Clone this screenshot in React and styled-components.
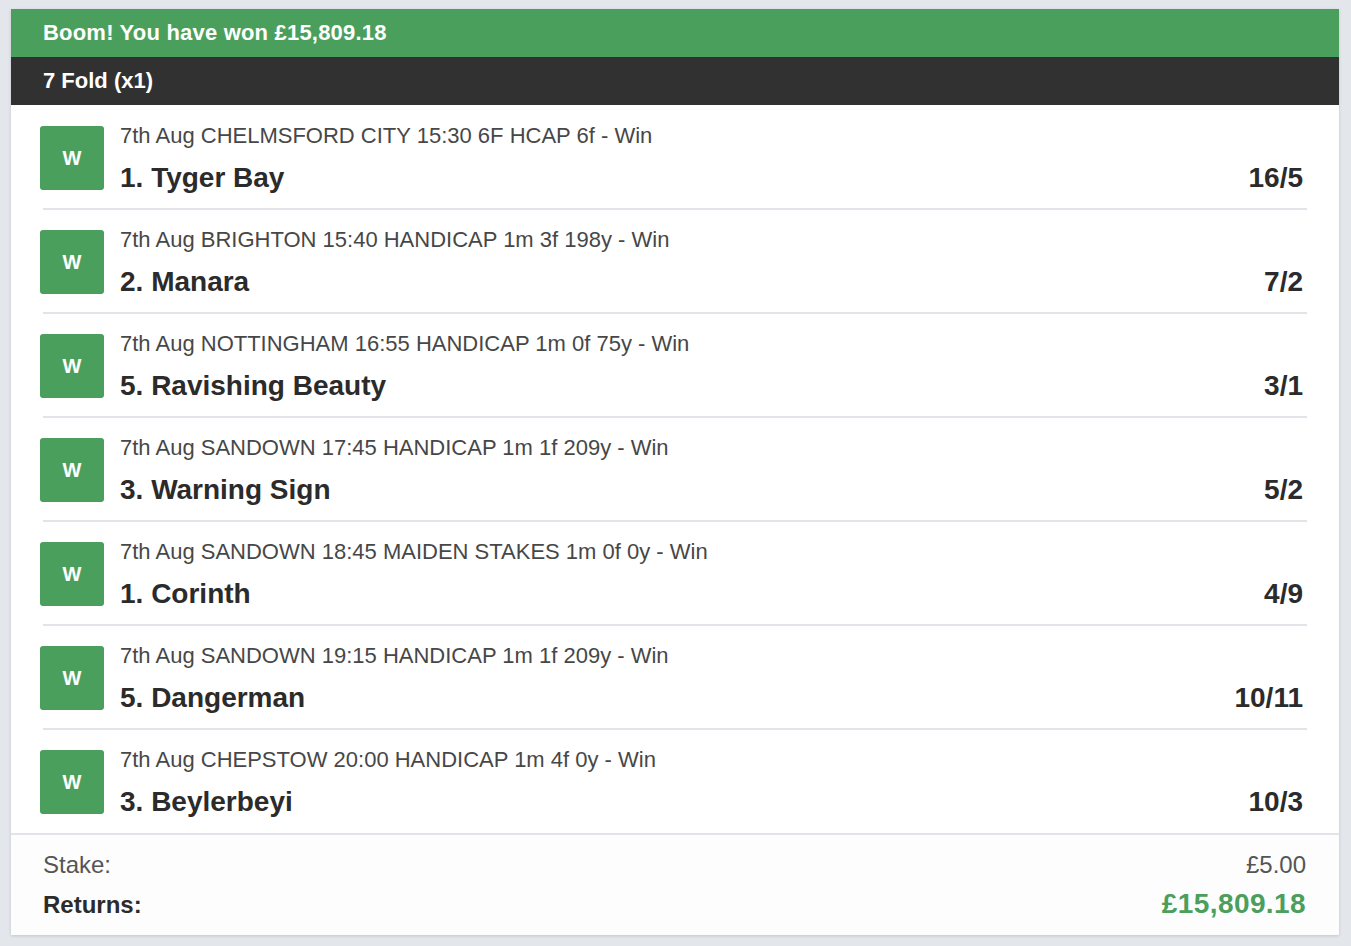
import { createGlobalStyle, styled } from 'styled-components';

const GlobalStyle = createGlobalStyle`
  body {
    margin: 0;
    background: #e3e7ec;
    font-family: 'Liberation Sans', Arial, sans-serif;
  }
`;

const Page = styled.div`
  padding: 9px 12px 11px 11px;
`;

const Card = styled.div`
  background: #ffffff;
  box-shadow: 0 1px 3px rgba(0, 0, 0, 0.15);
`;

const Banner = styled.div`
  height: 48px;
  display: flex;
  align-items: center;
  padding: 0 32px;
  color: #ffffff;
  font-size: 22px;
  font-weight: 700;
  letter-spacing: ${(p) => (p.$dark ? '0' : '0.2px')};
  background: ${(p) => (p.$dark ? '#313131' : '#4b9f5c')};
`;

const List = styled.div`
  padding: 1px 32px 0;
`;

const Leg = styled.div`
  display: flex;
  padding: 20px 4px ${(p) => (p.$last ? '17px' : '16px')} 0;
  border-bottom: ${(p) => (p.$last ? 'none' : '2px solid #e1e5ea')};
`;

const Badge = styled.div`
  width: 64px;
  height: 64px;
  margin-left: -3px;
  flex-shrink: 0;
  border-radius: 3px;
  background: #4b9f5c;
  color: #ffffff;
  font-size: 20px;
  font-weight: 700;
  display: flex;
  align-items: center;
  justify-content: center;
`;

const Info = styled.div`
  flex: 1;
  margin-left: 16px;
  display: flex;
  flex-direction: column;
`;

const Market = styled.div`
  font-size: 22px;
  line-height: 22px;
  color: #474747;
  margin-top: -1px;
`;

const NameRow = styled.div`
  display: flex;
  justify-content: space-between;
  align-items: baseline;
  margin-top: 17px;
  font-size: 28px;
  line-height: 28px;
  font-weight: 700;
  color: #2b2b2b;
`;

const Footer = styled.div`
  border-top: 2px solid #e1e5ea;
  padding: 15px 33px 15px 32px;
  background: #fdfdfd;
  display: flex;
  flex-direction: column;
  gap: 9px;
`;

const SumRow = styled.div`
  display: flex;
  justify-content: space-between;
  align-items: baseline;
  font-size: 24px;
  line-height: 30px;
  color: ${(p) => (p.$strong ? '#2b2b2b' : '#555555')};
  font-weight: ${(p) => (p.$strong ? 700 : 400)};
`;

const Value = styled.span`
  color: ${(p) => (p.$win ? '#4b9f5c' : '#555555')};
  font-size: ${(p) => (p.$win ? '28px' : '24px')};
  font-weight: ${(p) => (p.$win ? 700 : 400)};
  letter-spacing: ${(p) => (p.$win ? '0.4px' : '0')};
`;

const legs = [
  ['7th Aug CHELMSFORD CITY 15:30 6F HCAP 6f - Win', '1. Tyger Bay', '16/5'],
  ['7th Aug BRIGHTON 15:40 HANDICAP 1m 3f 198y - Win', '2. Manara', '7/2'],
  ['7th Aug NOTTINGHAM 16:55 HANDICAP 1m 0f 75y - Win', '5. Ravishing Beauty', '3/1'],
  ['7th Aug SANDOWN 17:45 HANDICAP 1m 1f 209y - Win', '3. Warning Sign', '5/2'],
  ['7th Aug SANDOWN 18:45 MAIDEN STAKES 1m 0f 0y - Win', '1. Corinth', '4/9'],
  ['7th Aug SANDOWN 19:15 HANDICAP 1m 1f 209y - Win', '5. Dangerman', '10/11'],
  ['7th Aug CHEPSTOW 20:00 HANDICAP 1m 4f 0y - Win', '3. Beylerbeyi', '10/3'],
];

export default function App() {
  return (
    <Page>
      <GlobalStyle />
      <Card>
        <Banner>Boom! You have won £15,809.18</Banner>
        <Banner $dark>7 Fold (x1)</Banner>
        <List>
          {legs.map(([market, name, odds], i) => (
            <Leg key={i} $last={i === legs.length - 1}>
              <Badge>W</Badge>
              <Info>
                <Market>{market}</Market>
                <NameRow>
                  <span>{name}</span>
                  <span>{odds}</span>
                </NameRow>
              </Info>
            </Leg>
          ))}
        </List>
        <Footer>
          <SumRow>
            <span>Stake:</span>
            <Value>£5.00</Value>
          </SumRow>
          <SumRow $strong>
            <span>Returns:</span>
            <Value $win>£15,809.18</Value>
          </SumRow>
        </Footer>
      </Card>
    </Page>
  );
}
